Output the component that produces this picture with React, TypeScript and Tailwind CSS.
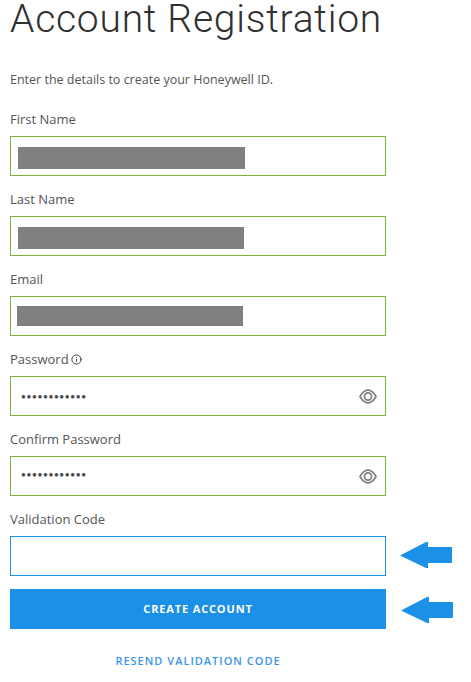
import { Info } from "lucide-react";

const font = { fontFamily: '"Open Sans", sans-serif' };

function EyeIcon() {
  return (
    <svg width="18" height="15" viewBox="0 0 18 15" fill="none" stroke="#808080" strokeWidth="1.7">
      <path d="M1 7.5 C3.5 3 6.5 1.2 9 1.2 C11.5 1.2 14.5 3 17 7.5 C14.5 12 11.5 13.8 9 13.8 C6.5 13.8 3.5 12 1 7.5 Z" />
      <circle cx="9" cy="7.5" r="3.6" />
    </svg>
  );
}

function Arrow() {
  return (
    <svg width="52" height="27" viewBox="0 0 52 27" fill="#1a90e6">
      <path d="M0 13.5 L26 0 L28 0 L28 5 L51 5 Q52 5 52 6 L52 20 Q52 21 51 21 L28 21 L28 26 L26 26 Z" />
    </svg>
  );
}

function Field({
  label,
  redact,
  password,
  info,
  barTop = "mt-[10px]",
  dotsClass = "",
}: {
  label: string;
  redact?: { left: string; width: string; height: string };
  password?: boolean;
  info?: boolean;
  barTop?: string;
  dotsClass?: string;
}) {
  return (
    <div className="flex h-[80px] flex-col">
      <label className="flex h-[18px] items-center gap-[2px] text-[13px] leading-[18px] text-[#555555]">
        {label}
        {info && <Info size={11} strokeWidth={2} className="text-[#303030]" />}
      </label>
      <div className="mt-[8px] flex h-[40px] items-center justify-between border border-[#7cb236] pr-[8px]">
        {redact && <div className={`${redact.left} ${redact.width} ${redact.height} ${barTop} self-start bg-[#808080]`} />}
        {password && (
          <>
            <span className={`pl-[10px] text-[8px] tracking-[0.65px] text-[#4a4a4a] ${dotsClass}`}>{"●●●●●●●●●●●●"}</span>
            <EyeIcon />
          </>
        )}
      </div>
    </div>
  );
}

export default function App() {
  return (
    <div className="relative h-[682px] w-[471px] overflow-hidden bg-white" style={font}>
      <div className="flex w-[386px] flex-col pl-[10px]">
        <h1 className="h-[38px] whitespace-nowrap text-[39px] font-light leading-[38px] tracking-[0.75px] text-[#303030]" style={{ fontFamily: "Roboto, sans-serif" }}>
          Account Registration
        </h1>
        <p className="mt-[33px] h-[18px] text-[12.5px] leading-[18px] text-[#555555]">
          Enter the details to create your Honeywell ID.
        </p>
        <div className="mt-[21px] flex flex-col">
          <Field label="First Name" redact={{ left: "ml-[7px]", width: "w-[227px]", height: "h-[22px]" }} />
          <Field label="Last Name" redact={{ left: "ml-[7px]", width: "w-[226px]", height: "h-[22px]" }} />
          <Field label="Email" redact={{ left: "ml-[6px]", width: "w-[226px]", height: "h-[20px]" }} barTop="mt-[9px]" />
          <Field label="Password" password info />
          <Field label="Confirm Password" password dotsClass="mb-[4px]" />
          <div className="flex flex-col">
            <label className="h-[18px] text-[13px] leading-[18px] text-[#555555]">Validation Code</label>
            <div className="mt-[8px] h-[40px] border border-[#1a90e6]" />
          </div>
        </div>
        <button className="mt-[13px] flex h-[40px] items-center justify-center bg-[#1a90e6] text-[11px] font-bold tracking-[0.85px] text-white">
          CREATE ACCOUNT
        </button>
        <a className="mt-[24px] block text-center text-[11px] font-semibold leading-[16px] tracking-[1px] text-[#3d94e8]">
          RESEND VALIDATION CODE
        </a>
      </div>
      <div className="absolute left-[400px] top-[542px]"><Arrow /></div>
      <div className="absolute left-[401px] top-[597px]"><Arrow /></div>
    </div>
  );
}
